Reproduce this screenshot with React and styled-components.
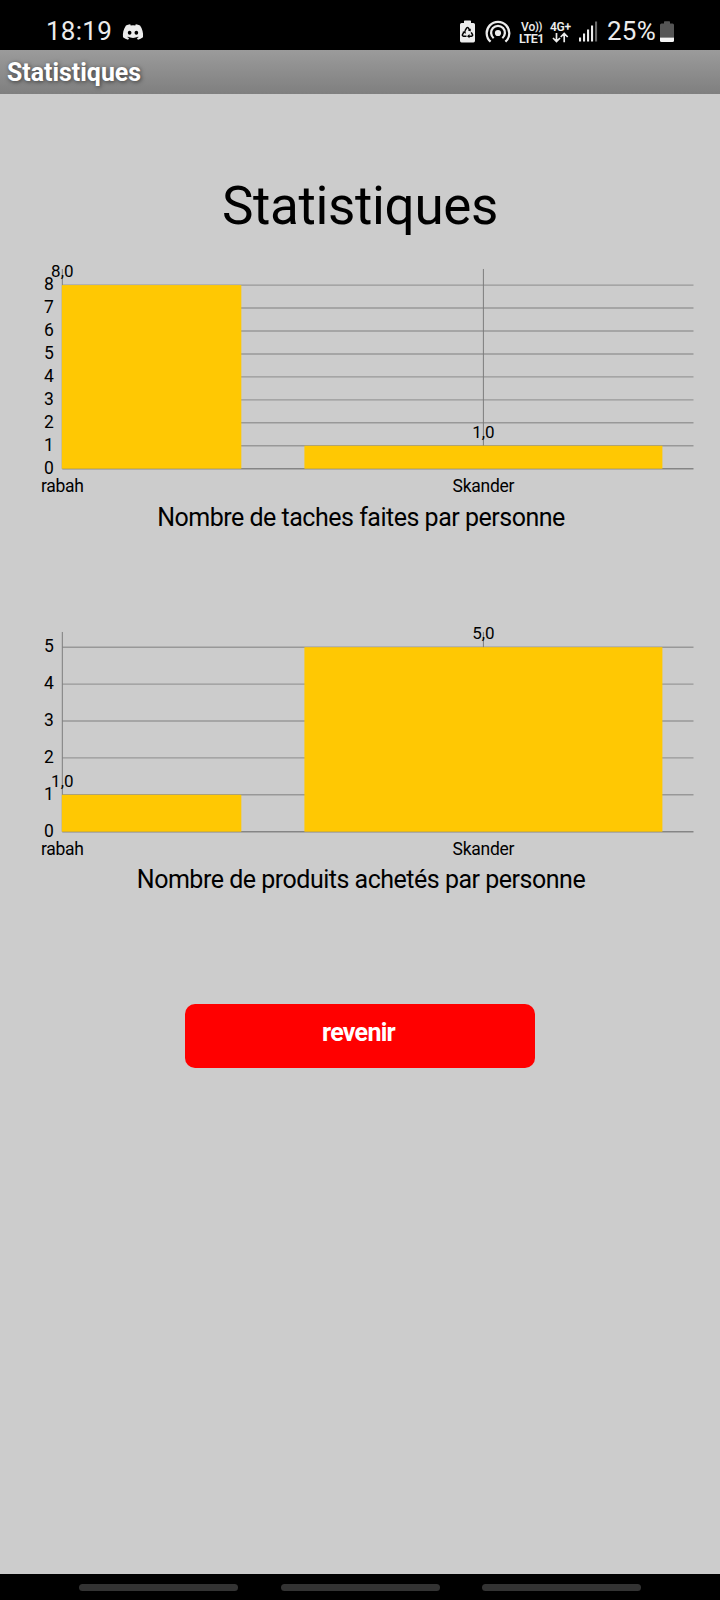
import React from 'react';
import styled, { createGlobalStyle } from 'styled-components';
import { FaDiscord } from 'react-icons/fa';

const GlobalStyle = createGlobalStyle`
  body {
    background: #ccc;
    font-family: Roboto, sans-serif;
    margin: 0;
  }
`;

const Screen = styled.div`
  background: #ccc;
  display: flex;
  flex-direction: column;
  height: 1600px;
  overflow: hidden;
  width: 720px;
`;

const StatusBar = styled.header`
  align-items: flex-start;
  background: #000;
  box-sizing: border-box;
  color: #ececec;
  display: flex;
  height: 50px;
  justify-content: space-between;
  padding: 18px 46px 0 46px;
`;

const StatusGroup = styled.div`
  align-items: center;
  display: flex;
  height: 27px;
`;

const StatusText = styled.span`
  font-size: 26px;
  letter-spacing: 0.25px;
  line-height: 27px;
  width: ${(props) => props.$width}px;
`;

const Glyph = styled.svg`
  display: block;
  flex: none;
  font-family: Roboto, sans-serif;
  margin-right: ${(props) => props.$gap || 0}px;
  overflow: visible;
`;

const ActionBar = styled.div`
  background: linear-gradient(#9b9b9b, #7f7f7f);
  box-sizing: border-box;
  color: #fff;
  font-size: 24.9px;
  font-weight: 700;
  height: 44px;
  line-height: 46px;
  padding-left: 7px;
  text-shadow: 1px 1px 4px rgba(0, 0, 0, 0.6);
`;

const Content = styled.main`
  align-items: center;
  display: flex;
  flex: 1;
  flex-direction: column;
`;

const Title = styled.h1`
  color: #000;
  font-size: 53px;
  font-weight: 400;
  height: 62px;
  letter-spacing: -0.35px;
  line-height: 62px;
  margin: 81px 0 0;
`;

const Figure = styled.figure`
  align-items: center;
  display: flex;
  flex-direction: column;
  margin: ${(props) => props.$top}px 0 0;
`;

const ChartSvg = styled.svg`
  display: block;
  font-family: Roboto, sans-serif;
  font-size: 17.5px;
`;

const Caption = styled.figcaption`
  color: #000;
  font-size: 25px;
  height: 30px;
  letter-spacing: -0.49px;
  line-height: 35px;
  padding-left: 2px;
`;

const BackButton = styled.button`
  background: #f00;
  border: 0;
  border-radius: 10px;
  color: #fff;
  font-family: Roboto, sans-serif;
  font-size: 25px;
  font-weight: 700;
  height: 64px;
  letter-spacing: -0.7px;
  margin: 112px 0 0;
  padding: 0 3px 7px 0;
  width: 350px;
`;

const NavBar = styled.nav`
  background: #000;
  box-sizing: border-box;
  display: flex;
  gap: 42.5px;
  height: 26px;
  justify-content: center;
  padding-top: 10px;
`;

const NavPill = styled.span`
  background: #333;
  border-radius: 4px;
  height: 7px;
  width: 159px;
`;

const PLOT_LEFT = 62.3;
const PLOT_RIGHT = 693.5;
const CENTER = 483.4;
const HALF_BAR = 179;

const BarChart = ({ people, max, base, step }) => {
  const y = (value) => base - value * step;
  const ticks = Array.from({ length: max + 1 }, (_, i) => i);
  const centers = [PLOT_LEFT, CENTER];

  return (
    <ChartSvg width="720" height={base + 31} viewBox={`0 0 720 ${base + 31}`}>
      {ticks.map((tick) => (
        <line
          key={tick}
          x1={PLOT_LEFT}
          x2={PLOT_RIGHT}
          y1={y(tick)}
          y2={y(tick)}
          stroke={tick === 0 ? '#858585' : '#989898'}
          strokeWidth="1.4"
        />
      ))}
      {centers.map((x) => (
        <line key={x} x1={x} x2={x} y1="9" y2={base} stroke="#7c7c7c" strokeWidth="1" />
      ))}
      {people.map((person, i) => {
        const left = Math.max(PLOT_LEFT - 0.5, centers[i] - HALF_BAR);
        return (
          <rect
            key={person.name}
            x={left}
            y={y(person.value)}
            width={centers[i] + HALF_BAR - left}
            height={person.value * step}
            fill="#ffc803"
          />
        );
      })}
      {ticks.map((tick) => (
        <text key={tick} x="53.8" y={y(tick) + 5.3} textAnchor="end">
          {tick}
        </text>
      ))}
      {people.map((person, i) => (
        <g key={person.name} textAnchor="middle">
          <text x={centers[i]} y={y(person.value) - 7.8} fontSize="17">
            {person.value.toFixed(1).replace('.', ',')}
          </text>
          <text x={centers[i]} y={base + 23} letterSpacing="-.25">
            {person.name}
          </text>
        </g>
      ))}
    </ChartSvg>
  );
};

const RecycleBattery = () => (
  <Glyph $gap={10} width="15" height="23" viewBox="0 0 15 23">
    <path
      d="M4 1.2Q4 .5 4.7.5h5.6q.7 0 .7.7V3h2.4Q15 3 15 4.6v16.2q0 1.7-1.6 1.7H1.6Q0 22.5 0 20.8V4.6Q0 3 1.6 3H4z"
      fill="#ececec"
    />
    <g fill="none" stroke="#000" strokeWidth="1.5">
      <path d="M4.9 10.8 6.7 7.900q.8-1 1.6 0l1.6 2.6" />
      <path d="M11.2 12.3l1.3 2.2q.5 1.5-1 1.7H8.5" />
      <path d="M6.5 16.2h-3q-1.5-.2-1-1.7l1.4-2.3" />
    </g>
    <path d="M10.7 8.500v3.100L8 10.6zM9.500 14v4.200L7 16.200zM2.200 12l3.300-1.300.3 3.100z" fill="#000" />
  </Glyph>
);

const Hotspot = () => (
  <Glyph $gap={8} width="26" height="24" viewBox="0 0 26 24">
    <g fill="none" stroke="#ececec" strokeWidth="2.3">
      <path d="M5.6 21.7A11.3 11.3 0 1 1 20.4 21.7" />
      <path d="M8.700 18.100A6.900 6.900 0 1 1 17.300 18.100" />
    </g>
    <circle cx="13" cy="13" r="3.1" fill="#ececec" />
  </Glyph>
);

const VoLte = () => (
  <Glyph $gap={4.5} width="26" height="24" viewBox="0 0 26 24" fill="#ececec" fontWeight="500">
    <text x="2" y="10.5" fontSize="12">
      Vo
      <tspan dy="-.6" fontSize="10" fontWeight="700">
        ))
      </tspan>
    </text>
    <text x="0" y="22.5" fontSize="12.5" textLength="25.5" fontWeight="600">
      LTE1
    </text>
  </Glyph>
);

const FourG = () => (
  <Glyph $gap={8.5} width="21" height="24" viewBox="0 0 21 24" fill="#ececec" fontWeight="600">
    <text x="0" y="10.5" fontSize="12" textLength="21">
      4G+
    </text>
    <path
      d="M6.500 13v8.500M3 18l3.500 3.600L10 18M14.200 22.300V13.500M10.700 17l3.500-3.600 3.500 3.600"
      fill="none"
      stroke="#ececec"
      strokeWidth="1.7"
    />
  </Glyph>
);

const Signal = () => (
  <Glyph $gap={10} width="18" height="21" viewBox="0 0 18 21">
    {[4, 8, 12, 16, 20].map((height, i) => (
      <rect
        key={height}
        x={i * 4}
        y={20.5 - height}
        width="2.1"
        height={height}
        fill={i === 4 ? '#686868' : '#ececec'}
      />
    ))}
  </Glyph>
);

const Battery = () => (
  <Glyph width="14" height="22" viewBox="0 0 14 22">
    <path
      d="M4 1Q4 .3 4.7.3h4.6q.7 0 .7.7v1.500h2.500Q14 2.500 14 4v12.500H0V4Q0 2.500 1.500 2.500H4z"
      fill="#555"
    />
    <path d="M0 16.500h14v3q0 1.500-1.500 1.500h-11Q0 21 0 19.500z" fill="#f4f4f4" />
  </Glyph>
);

export default () => (
  <Screen>
    <GlobalStyle />
    <StatusBar>
      <StatusGroup>
        <StatusText $width={76}>18:19</StatusText>
        <FaDiscord size={22} />
      </StatusGroup>
      <StatusGroup>
        <RecycleBattery />
        <Hotspot />
        <VoLte />
        <FourG />
        <Signal />
        <StatusText $width={53}>25%</StatusText>
        <Battery />
      </StatusGroup>
    </StatusBar>
    <ActionBar>Statistiques</ActionBar>
    <Content>
      <Title>Statistiques</Title>
      <Figure $top={23}>
        <BarChart
          max={8}
          base={208.7}
          step={22.95}
          people={[{ name: 'rabah', value: 8 }, { name: 'Skander', value: 1 }]}
        />
        <Caption>Nombre de taches faites par personne</Caption>
      </Figure>
      <Figure $top={93}>
        <BarChart
          max={5}
          base={208.7}
          step={36.9}
          people={[{ name: 'rabah', value: 1 }, { name: 'Skander', value: 5 }]}
        />
        <Caption>Nombre de produits achetés par personne</Caption>
      </Figure>
      <BackButton>revenir</BackButton>
    </Content>
    <NavBar>
      <NavPill />
      <NavPill />
      <NavPill />
    </NavBar>
  </Screen>
);
